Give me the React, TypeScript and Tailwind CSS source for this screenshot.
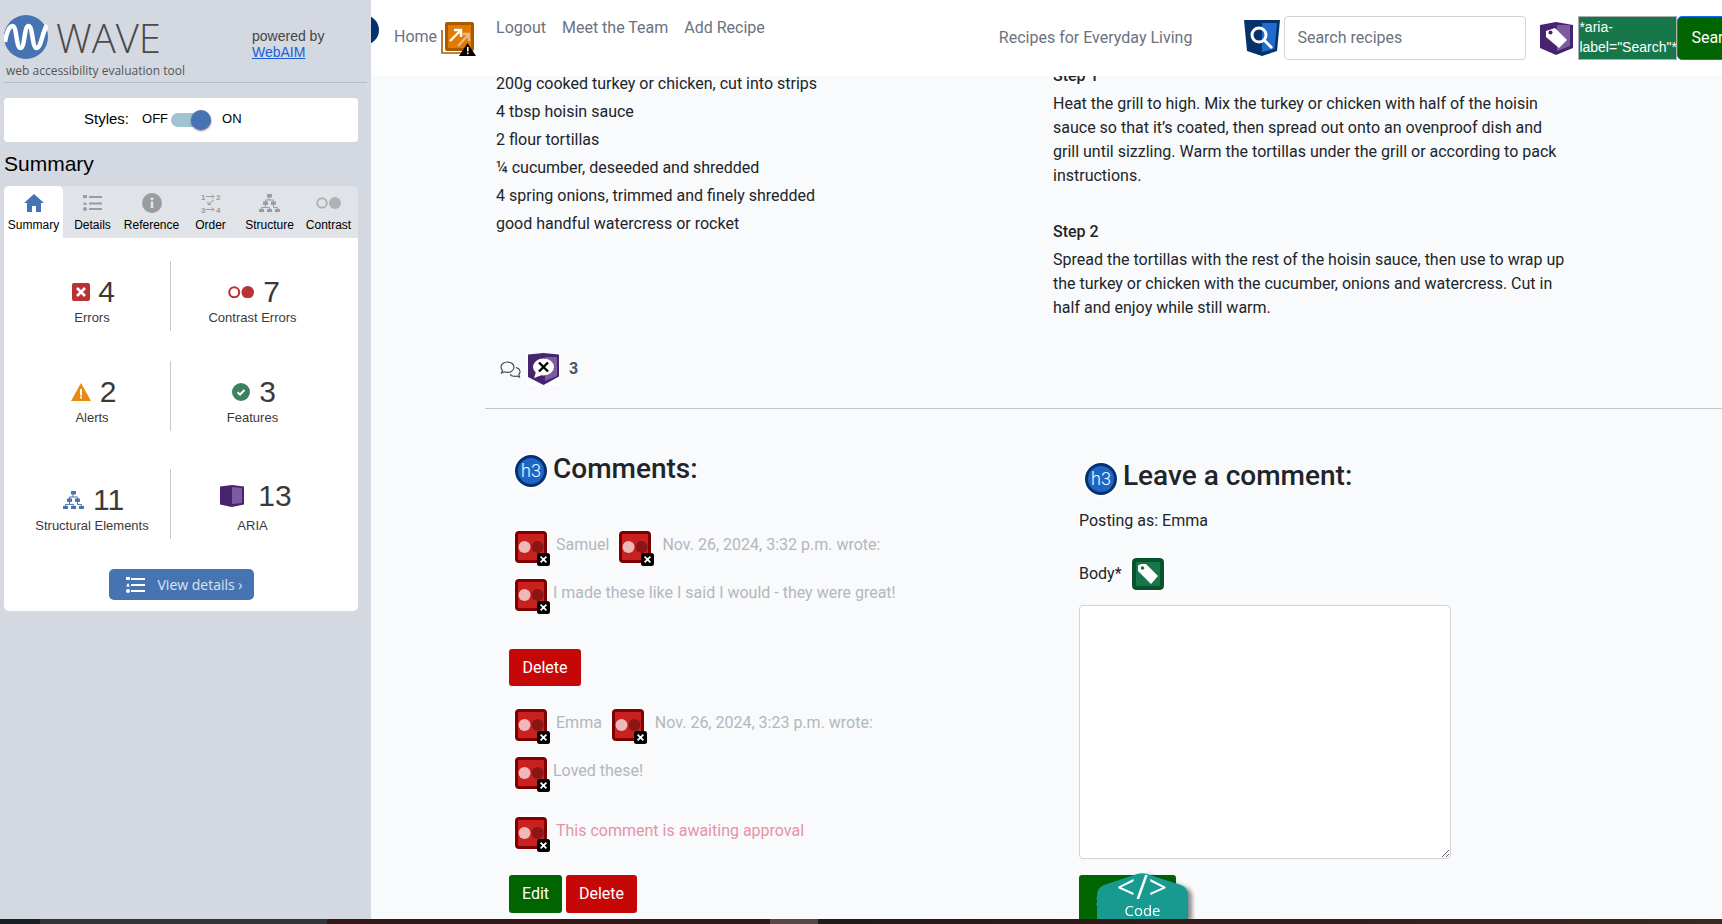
import { type ReactNode } from "react";

const ingredients = [
  "200g cooked turkey or chicken, cut into strips",
  "4 tbsp hoisin sauce",
  "2 flour tortillas",
  "¼ cucumber, deseeded and shredded",
  "4 spring onions, trimmed and finely shredded",
  "good handful watercress or rocket",
];

function WaveLogo() {
  return (
    <svg width="44" height="44" viewBox="0 0 44 44" className="shrink-0">
      <circle cx="22" cy="22" r="22" fill="#4673b2" />
      <path
        d="M1 27C3 15 6 11 8.500 11c4.500 0 3.500 22 8 22s3.500-22 8-22 3.500 22 8 22c4.500 0 5.500-15 10.500-23"
        fill="none"
        stroke="#fff"
        strokeWidth="4.5"
      />
    </svg>
  );
}

function HomeIcon() {
  return (
    <svg width="20" height="18" viewBox="0 0 20 18">
      <path d="M10 0 20 9h-3v9h-5v-6H8v6H3V9H0z" fill="#4673b2" />
    </svg>
  );
}

function DetailsIcon() {
  return (
    <svg width="20" height="17" viewBox="0 0 20 17" fill="#9a9ca0">
      <rect x="0" y="0" width="4" height="3" />
      <path d="M2 6.500 4 10H0z" />
      <circle cx="2" cy="14" r="2" />
      <rect x="6" y="1" width="13" height="2" />
      <rect x="6" y="7.500" width="13" height="2" />
      <rect x="6" y="13" width="13" height="2" />
    </svg>
  );
}

function InfoIcon() {
  return (
    <svg width="20" height="20" viewBox="0 0 20 20">
      <circle cx="10" cy="10" r="10" fill="#9a9ca0" />
      <rect x="8.700" y="8.500" width="2.600" height="6.500" fill="#e0e3e8" />
      <circle cx="10" cy="5.800" r="1.500" fill="#e0e3e8" />
    </svg>
  );
}

function OrderIcon() {
  return (
    <svg width="20" height="20" viewBox="0 0 20 20" fill="none" stroke="#9a9ca0" strokeWidth="1">
      <path d="M5 3.500h8m-2-2 2 2-2 2M13 7 7 11.500m0-3v3h3M5 16.500h8m-2-2 2 2-2 2" />
      <g fontSize="8" fontWeight="700" fill="#9a9ca0" stroke="none" fontFamily="Liberation Sans">
        <text x="0" y="6.500">1</text>
        <text x="15" y="6.500">2</text>
        <text x="0" y="19.500">3</text>
        <text x="15" y="19.500">4</text>
      </g>
    </svg>
  );
}

function TreeIcon({ color, size }: { color: string; size: number }) {
  return (
    <svg width={size} height={size * 0.9} viewBox="0 0 21 19" fill={color}>
      <rect x="8" y="0" width="5" height="3.500" />
      <rect x="4" y="7.500" width="5" height="3.500" />
      <rect x="12" y="7.500" width="5" height="3.500" />
      <rect x="0" y="15" width="5" height="3.500" />
      <rect x="8" y="15" width="5" height="3.500" />
      <rect x="16" y="15" width="5" height="3.500" />
      <path d="M10 3v3H6.500v2M10 6h4.500v2M6.500 11v2.500h-4V15M6.500 13.500h4V15M14.500 11v2.500h4V15" fill="none" stroke={color} strokeWidth="1" />
    </svg>
  );
}

function ContrastDots({ color, w }: { color: string; w: number }) {
  return (
    <svg width={w} height={w * 0.48} viewBox="0 0 25 12">
      <circle cx="6" cy="6" r="4.800" fill="none" stroke={color} strokeWidth="2" />
      <circle cx="19" cy="6" r="6" fill={color} />
    </svg>
  );
}

function ListIcon() {
  return (
    <svg width="19" height="16" viewBox="0 0 19 16" fill="#fff">
      <rect x="0" y="0" width="4" height="3" />
      <path d="M2 6 4 9.500H0z" />
      <circle cx="2" cy="14" r="2" />
      <rect x="5" y="1" width="14" height="2" />
      <rect x="5" y="7" width="14" height="2" />
      <rect x="5" y="13" width="14" height="2" />
    </svg>
  );
}

function ErrorSquare() {
  return (
    <svg width="18" height="18" viewBox="0 0 18 18">
      <rect width="18" height="18" rx="2" fill="#b93333" />
      <path d="M5 5l8 8m0-8-8 8" stroke="#fff" strokeWidth="2.600" />
    </svg>
  );
}

function AlertTriangle() {
  return (
    <svg width="20" height="18" viewBox="0 0 20 18">
      <path d="M10 0 20 18H0z" fill="#e68a12" />
      <rect x="9" y="6" width="2" height="6.500" fill="#fff" />
      <rect x="9" y="13.500" width="2" height="2" fill="#fff" />
    </svg>
  );
}

function FeatureCheck() {
  return (
    <svg width="18" height="18" viewBox="0 0 18 18">
      <circle cx="9" cy="9" r="9" fill="#3e8161" />
      <path d="M5.500 9.200 8 11.500l4.500-4.500" fill="none" stroke="#fff" strokeWidth="2" />
    </svg>
  );
}

function AriaBox() {
  return (
    <svg width="24" height="24" viewBox="0 0 24 24" className="ml-[4px]">
      <path d="M0 2.500 12 1l12 1.500v18L12 23 0 20.500z" fill="#47246f" />
      <path d="M12 3l10 1v15l-10 1z" fill="#7c5c9e" />
      <path d="M12 2v20l-3 .5V2z" fill="#47246f" />
    </svg>
  );
}

// purple shield with a tag, used next to the search button
function AriaTag() {
  return (
    <svg width="33" height="33" viewBox="0 0 33 33">
      <path d="M0 3 16 0l17 3v23l-17 7-16-7z" fill="#47246f" />
      <path d="M17 3h13v21l-13 5z" fill="#7c5c9e" />
      <path d="M6 9l9-3 12 12-8 8L6 15z" fill="#fff" />
      <circle cx="10.500" cy="10.500" r="2" fill="#47246f" />
    </svg>
  );
}

function SearchShield() {
  return (
    <svg width="36" height="36" viewBox="0 0 36 36" className="shrink-0">
      <path d="M0 0h36l-3 31-15 5-15-5z" fill="#05326b" />
      <path d="M18 3h15l-2.500 26L18 32z" fill="#1f6bce" />
      <circle cx="15" cy="15" r="7" fill="none" stroke="#fff" strokeWidth="3" />
      <path d="M20 20l8 8" stroke="#fff" strokeWidth="3" />
    </svg>
  );
}

function NewWindowAlert() {
  return (
    <div className="relative w-[36px] h-[34px] shrink-0">
      <svg width="36" height="34" viewBox="0 0 36 34">
        <path d="M1 8v23h21" fill="none" stroke="#a85a00" strokeWidth="1.600" />
        <rect x="4" y="0" width="29" height="29" rx="2" fill="#a85a00" />
        <rect x="7" y="3" width="23" height="23" fill="#e07a00" />
        <path d="M9 19 20 8m-7 0h7v7" fill="none" stroke="#fff" strokeWidth="2.400" />
        <path d="M17 24 28 12m-7 0h7v7" fill="none" stroke="#f2b684" strokeWidth="2.400" />
        <path d="M26.500 21 35 34H18z" fill="#000" />
        <rect x="26" y="25" width="1.600" height="4.500" fill="#fff" />
        <rect x="26" y="30.500" width="1.600" height="1.600" fill="#fff" />
      </svg>
    </div>
  );
}

// red contrast flag that WAVE drops in front of low contrast text
function ContrastFlag() {
  return (
    <span className="relative block w-[32px] h-[32px] shrink-0 rounded-[4px] ring-2 ring-white">
      <svg width="32" height="32" viewBox="0 0 32 32" className="block">
        <rect width="32" height="32" rx="4" fill="#7f0000" />
        <rect x="3" y="3" width="26" height="26" fill="#c92020" />
        <circle cx="9.500" cy="16" r="6" fill="#efb9b9" />
        <circle cx="22.500" cy="16" r="6" fill="#8a1616" />
      </svg>
      <svg width="13" height="13" viewBox="0 0 13 13" className="absolute -right-[3px] -bottom-[3px]">
        <rect width="13" height="13" rx="2.500" fill="#000" />
        <path d="M3.600 3.600l5.800 5.800m0-5.800-5.800 5.800" stroke="#fff" strokeWidth="1.800" />
      </svg>
    </span>
  );
}

function H3Badge() {
  return (
    <span className="flex items-center justify-center w-[32px] h-[32px] shrink-0 rounded-full border-[3px] border-[#063170] bg-[#1f66c4] ring-2 ring-white text-white text-[18px] font-light leading-none">
      h3
    </span>
  );
}

function GreenTag() {
  return (
    <svg width="32" height="32" viewBox="0 0 32 32" className="rounded-[4px] ring-2 ring-white">
      <rect width="32" height="32" rx="4" fill="#06532c" />
      <rect x="4" y="4" width="24" height="24" fill="#17774a" />
      <path d="M6 7.500 9 6h5l12 12-7 8L6 13z" fill="#fff" />
      <circle cx="10.500" cy="10" r="1.800" fill="#17774a" />
    </svg>
  );
}

function CommentsBadge() {
  return (
    <svg width="33" height="32" viewBox="0 0 33 32" className="bg-white">
      <path d="M1 1.500 16.500 0 32 1.500v22L16.500 32 1 24z" fill="#47246f" />
      <path d="M18 4h12v19l-12 5z" fill="#7c5c9e" />
      <ellipse cx="16.500" cy="14" rx="10.500" ry="8.500" fill="#fff" />
      <path d="M9 19l-2 6 8-3z" fill="#fff" />
      <path d="M12 9.500l9 9m0-9-9 9" stroke="#000" strokeWidth="2.400" />
    </svg>
  );
}

function ChatIcon() {
  return (
    <svg width="21" height="17" viewBox="0 0 21 17" fill="none" stroke="#374151" strokeWidth="1.100">
      <path d="M7.500 1C3.800 1 1 3.200 1 6c0 1.300.6 2.400 1.500 3.300L1.500 12l3-1.200c1 .4 2 .6 3 .6 3.600 0 6.500-2.300 6.500-5.200S11.100 1 7.500 1z" />
      <path d="M16 6.500c2.300.7 4 2.300 4 4.300 0 1-.5 2-1.200 2.700l.7 2.500-2.700-1c-1 .3-2 .4-3 .3-1.600-.2-3-.9-3.800-1.900" />
    </svg>
  );
}

function Tab({ icon, label, active }: { icon: ReactNode; label: string; active?: boolean }) {
  return (
    <div
      className={
        active
          ? "flex flex-col items-center justify-end w-[59px] h-[52px] pb-[6px] bg-white rounded-t-[5px]"
          : "flex flex-col items-center justify-end w-[59px] h-[52px] pb-[6px]"
      }
    >
      <div className="flex items-center justify-center h-[22px] mb-[4px]">{icon}</div>
      <span className="text-[12px] leading-[14px] text-black whitespace-nowrap">{label}</span>
    </div>
  );
}

function Stat({
  icon,
  value,
  label,
  gap,
  labelClass = "mt-[1px]",
}: {
  icon: ReactNode;
  value: string;
  label: string;
  gap: string;
  labelClass?: string;
}) {
  return (
    <div className="flex flex-col items-center">
      <div className={`flex items-center h-[34px] ml-[3px] ${gap}`}>
        {icon}
        <span className="text-[30px] leading-[34px] text-[#3a3a3a]">{value}</span>
      </div>
      <span className={`text-[13px] leading-[15px] text-[#3a3a3a] ${labelClass}`}>{label}</span>
    </div>
  );
}

function StatRow({ left, right, className }: { left: ReactNode; right: ReactNode; className: string }) {
  return (
    <div className={`flex h-[70px] ${className}`}>
      <div className="w-[167px] pl-[10px] pt-[14px] border-r border-[#c8c8c8]">{left}</div>
      <div className="w-[163px] pt-[14px]">{right}</div>
    </div>
  );
}

function Sidebar() {
  return (
    <aside className="flex flex-col w-[371px] shrink-0 h-full px-[4px] bg-[#d4d8e0] font-['Liberation_Sans',sans-serif]">
      <div className="flex items-start pt-[15px] h-[83px] border-b border-[#b8bbc0]">
        <div className="w-[248px]">
          <div className="flex items-center gap-[8px] h-[44px]">
            <WaveLogo />
            <span className="mt-[2px] font-['Open_Sans',sans-serif] font-light text-[40px] leading-[44px] text-[#4a4a4a]">WAVE</span>
          </div>
          <div className="pl-[2px] mt-[3px] font-['Open_Sans',sans-serif] text-[12px] leading-[18px] text-[#555555] whitespace-nowrap">
            web accessibility evaluation tool
          </div>
        </div>
        <div className="pt-[13px] text-[14px] leading-[16px] text-[#444444]">
          <div>powered by</div>
          <a href="#" className="text-[#1a5fd6] underline">
            WebAIM
          </a>
        </div>
      </div>

      <div className="flex items-center w-[354px] h-[44px] mt-[15px] pl-[80px] rounded-[4px] bg-white text-black">
        <span className="-mt-[2px] text-[15px]">Styles:</span>
        <span className="ml-[13px] -mt-[2px] text-[13px]">OFF</span>
        <div className="relative w-[40px] h-[14px] ml-[3px] rounded-full bg-[#a0c4d0]">
          <span className="absolute -top-[3px] right-0 w-[20px] h-[20px] rounded-full bg-[#4673b2] shadow-[0_1px_2px_rgba(0,0,0,0.5)]" />
        </div>
        <span className="ml-[11px] -mt-[2px] text-[13px]">ON</span>
      </div>

      <h2 className="mt-[10px] text-[21px] leading-[24px] text-black">Summary</h2>

      <div className="w-[354px] mt-[10px] rounded-t-[5px] bg-[#e0e3e8] flex">
        <Tab active icon={<HomeIcon />} label="Summary" />
        <Tab icon={<DetailsIcon />} label="Details" />
        <Tab icon={<InfoIcon />} label="Reference" />
        <Tab icon={<OrderIcon />} label="Order" />
        <Tab icon={<TreeIcon color="#9a9ca0" size={21} />} label="Structure" />
        <Tab icon={<ContrastDots color="#b0b2b6" w={25} />} label="Contrast" />
      </div>

      <div className="w-[354px] h-[373px] pt-[23px] rounded-b-[5px] bg-white">
        <StatRow
          className=""
          left={<Stat icon={<ErrorSquare />} value="4" label="Errors" gap="gap-[8px]" />}
          right={<Stat icon={<ContrastDots color="#b93333" w={26} />} value="7" label="Contrast Errors" gap="gap-[9px]" />}
        />
        <StatRow
          className="mt-[30px]"
          left={<Stat icon={<AlertTriangle />} value="2" label="Alerts" gap="gap-[9px]" />}
          right={<Stat icon={<FeatureCheck />} value="3" label="Features" gap="gap-[9px]" />}
        />
        <StatRow
          className="mt-[38px]"
          left={<Stat icon={<TreeIcon color="#4673b2" size={21} />} value="11" label="Structural Elements" gap="gap-[9px]" />}
          right={
            <div className="-mt-[4px]">
              <Stat icon={<AriaBox />} value="13" label="ARIA" gap="gap-[14px]" labelClass="mt-[5px]" />
            </div>
          }
        />
        <div className="flex justify-center mt-[30px]">
          <button className="flex items-center w-[145px] h-[31px] pl-[17px] rounded-[5px] bg-[#4673b2] text-white/80 font-['Open_Sans',sans-serif] text-[14px]">
            <ListIcon />
            <span className="ml-[13px] whitespace-nowrap">View details ›</span>
          </button>
        </div>
      </div>
    </aside>
  );
}

function Header() {
  return (
    <header className="relative z-10 flex items-start h-[76px] shrink-0 bg-white overflow-hidden text-[16px] text-[#6b7280] whitespace-nowrap">
      <span className="absolute -left-[22px] top-[15px] w-[30px] h-[30px] rounded-full bg-[#063170]" />
      <span className="ml-[23px] mt-[25px] leading-[24px] shrink-0">Home</span>
      <div className="ml-[4px] mt-[22px] shrink-0">
        <NewWindowAlert />
      </div>
      <nav className="flex gap-[16px] ml-[19px] mt-[16px] leading-[24px] shrink-0">
        <span>Logout</span>
        <span>Meet the Team</span>
        <span>Add Recipe</span>
      </nav>
      <span className="ml-[234px] mt-[26px] leading-[24px] shrink-0">Recipes for Everyday Living</span>
      <div className="ml-[52px] mt-[20px] shrink-0">
        <SearchShield />
      </div>
      <div className="flex items-center w-[242px] h-[44px] ml-[4px] mt-[16px] pl-[12px] rounded-[4px] border border-[#ced4da] bg-white shrink-0">
        Search recipes
      </div>
      <div className="ml-[14px] mt-[22px] shrink-0">
        <AriaTag />
      </div>
      <div className="w-[99px] h-[44px] ml-[5px] mt-[16px] shrink-0 bg-[#17774a] border border-[#b0b0b0] text-white text-[14px] leading-[20px] whitespace-normal font-['Liberation_Sans',sans-serif]">
        *aria-label="Search"*
      </div>
      <div className="flex items-center w-[70px] h-[44px] mt-[16px] pl-[13px] shrink-0 rounded-l-[5px] border border-[#0d6efd] bg-[#006400] text-white">
        Search
      </div>
    </header>
  );
}

function MetaRow({ name, date }: { name: string; date: string }) {
  return (
    <div className="flex items-center h-[32px] ml-[6px] text-[#b3b7bc]">
      <ContrastFlag />
      <span className="ml-[9px] mb-[4px]">{name}</span>
      <span className="ml-[10px]">
        <ContrastFlag />
      </span>
      <span className="ml-[11px] mb-[4px]">{date}</span>
    </div>
  );
}

function TextRow({ text }: { text: string }) {
  return (
    <div className="flex items-center h-[32px] ml-[6px] mt-[16px] text-[#b3b7bc]">
      <ContrastFlag />
      <span className="ml-[6px] mb-[4px]">{text}</span>
    </div>
  );
}

function Comments() {
  return (
    <div className="w-[570px] shrink-0">
      <div className="flex items-center gap-[6px] h-[32px] ml-[6px] mt-[46px]">
        <H3Badge />
        <h3 className="-mt-[5px] text-[28px] leading-[34px] font-medium text-[#212529]">Comments:</h3>
      </div>
      <div className="mt-[44px]">
        <MetaRow name="Samuel" date="Nov. 26, 2024, 3:32 p.m. wrote:" />
      </div>
      <TextRow text="I made these like I said I would - they were great!" />
      <button className="block w-[72px] h-[37px] mt-[38px] rounded-[3px] bg-[#c60707] text-white">Delete</button>
      <div className="mt-[23px]">
        <MetaRow name="Emma" date="Nov. 26, 2024, 3:23 p.m. wrote:" />
      </div>
      <TextRow text="Loved these!" />
      <div className="flex items-center h-[32px] ml-[6px] mt-[28px] text-[#e891a8]">
        <ContrastFlag />
        <span className="ml-[9px] mb-[4px]">This comment is awaiting approval</span>
      </div>
      <div className="flex gap-[4px] mt-[26px]">
        <button className="w-[53px] h-[38px] rounded-[3px] bg-[#006400] text-white">Edit</button>
        <button className="w-[71px] h-[38px] rounded-[3px] bg-[#c60707] text-white">Delete</button>
      </div>
    </div>
  );
}

function LeaveComment() {
  return (
    <div className="w-[373px] shrink-0">
      <div className="flex items-center gap-[6px] h-[32px] ml-[6px] mt-[54px]">
        <H3Badge />
        <h3 className="-mt-[6px] text-[28px] leading-[34px] font-medium text-[#212529] whitespace-nowrap">Leave a comment:</h3>
      </div>
      <p className="mt-[14px] leading-[24px] text-[#212529]">Posting as: Emma</p>
      <div className="flex items-center gap-[10px] mt-[25px] h-[32px] text-[#212529]">
        <span>Body*</span>
        <GreenTag />
      </div>
      <textarea className="block w-[372px] h-[254px] mt-[15px] rounded-[4px] border border-[#ced4da] bg-white" />
      <button className="block w-[97px] h-[60px] mt-[16px] pt-[15px] pl-[17px] text-left rounded-[3px] bg-[#006400] text-white">
        <span className="block h-full">Submit</span>
      </button>
    </div>
  );
}

export default function App() {
  return (
    <div className="flex flex-col w-[1722px] h-[924px] overflow-hidden">
      <div className="flex h-[919px] shrink-0">
        <Sidebar />
        <main className="relative flex flex-col flex-1 min-w-0 overflow-hidden bg-[#f8fafc] font-['Roboto',sans-serif] text-[16px]">
          <Header />

          <div className="flex shrink-0 h-[332px] pl-[125px]">
            <ul className="w-[557px] shrink-0 -mt-[6px] leading-[28px] text-[#212529]">
              {ingredients.map((line) => (
                <li key={line}>{line}</li>
              ))}
            </ul>
            <div className="w-[516px] -mt-[12px] leading-[24px] text-[#212529]">
              <p className="font-medium leading-[24px]">Step 1</p>
              <p className="mt-[4px]">
                Heat the grill to high. Mix the turkey or chicken with half of the hoisin sauce so that it’s coated, then spread out onto an ovenproof dish and grill until sizzling. Warm the tortillas under the grill or according to pack instructions.
              </p>
              <p className="mt-[32px] font-medium">Step 2</p>
              <p className="mt-[4px]">
                Spread the tortillas with the rest of the hoisin sauce, then use to wrap up the turkey or chicken with the cucumber, onions and watercress. Cut in half and enjoy while still warm.
              </p>
            </div>
          </div>

          <div className="flex items-center h-[32px] ml-[129px] -mt-[55px] shrink-0">
            <ChatIcon />
            <span className="ml-[6px]">
              <CommentsBadge />
            </span>
            <span className="ml-[9px] font-bold text-[#4b5563]">3</span>
          </div>
          <div className="h-px ml-[114px] mt-[23px] shrink-0 bg-[#c4c6c9]" />

          <div className="flex ml-[138px] text-[16px]">
            <Comments />
            <LeaveComment />
          </div>

          {/* floating code tab */}
          <div className="absolute left-[726px] bottom-0 w-[91px] h-[46px] drop-shadow-[4px_2px_2px_rgba(0,0,0,0.45)]">
            <svg width="91" height="46" viewBox="0 0 91 46" className="absolute inset-0">
              <path d="M0 46V22q0-7 7-10L40 1q5-1.500 10 0l34 11q7 3 7 10v24z" fill="#189a90" />
            </svg>
            <div className="relative flex flex-col items-center text-white font-['Open_Sans',sans-serif]">
              <span className="-mt-[1px] text-[32px] leading-[30px] tracking-[1px]">&lt;/&gt;</span>
              <span className="text-[15px] leading-[16px]">Code</span>
            </div>
          </div>
        </main>
      </div>

      <div className="flex h-[5px] shrink-0">
        <div className="w-[40px] bg-[#1a2023]" />
        <div className="w-[287px] bg-[#333536]" />
        <div className="w-[443px] bg-[#341818]" />
        <div className="w-[48px] bg-[#5a4545]" />
        <div className="flex-1 bg-gradient-to-r from-[#231a1a] via-[#351a1a] to-[#3a2a20]" />
      </div>
    </div>
  );
}
